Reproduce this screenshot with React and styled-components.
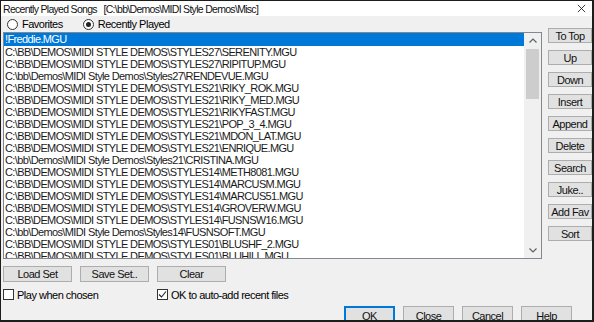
import React, { useState } from 'react';
import styled, { createGlobalStyle } from 'styled-components';

const GlobalStyle = createGlobalStyle`
  html, body {
    margin: 0;
    padding: 0;
    background: #f0f0f0;
  }
  * {
    box-sizing: border-box;
  }
`;

const songs = [
  '!Freddie.MGU',
  'C:\\BB\\DEMOS\\MIDI STYLE DEMOS\\STYLES27\\SERENITY.MGU',
  'C:\\BB\\DEMOS\\MIDI STYLE DEMOS\\STYLES27\\RIPITUP.MGU',
  'C:\\bb\\Demos\\MIDI Style Demos\\Styles27\\RENDEVUE.MGU',
  'C:\\BB\\DEMOS\\MIDI STYLE DEMOS\\STYLES21\\RIKY_ROK.MGU',
  'C:\\BB\\DEMOS\\MIDI STYLE DEMOS\\STYLES21\\RIKY_MED.MGU',
  'C:\\BB\\DEMOS\\MIDI STYLE DEMOS\\STYLES21\\RIKYFAST.MGU',
  'C:\\BB\\DEMOS\\MIDI STYLE DEMOS\\STYLES21\\POP_3_4.MGU',
  'C:\\BB\\DEMOS\\MIDI STYLE DEMOS\\STYLES21\\MDON_LAT.MGU',
  'C:\\BB\\DEMOS\\MIDI STYLE DEMOS\\STYLES21\\ENRIQUE.MGU',
  'C:\\bb\\Demos\\MIDI Style Demos\\Styles21\\CRISTINA.MGU',
  'C:\\BB\\DEMOS\\MIDI STYLE DEMOS\\STYLES14\\METH8081.MGU',
  'C:\\BB\\DEMOS\\MIDI STYLE DEMOS\\STYLES14\\MARCUSM.MGU',
  'C:\\BB\\DEMOS\\MIDI STYLE DEMOS\\STYLES14\\MARCUS51.MGU',
  'C:\\BB\\DEMOS\\MIDI STYLE DEMOS\\STYLES14\\GROVERW.MGU',
  'C:\\BB\\DEMOS\\MIDI STYLE DEMOS\\STYLES14\\FUSNSW16.MGU',
  'C:\\bb\\Demos\\MIDI Style Demos\\Styles14\\FUSNSOFT.MGU',
  'C:\\BB\\DEMOS\\MIDI STYLE DEMOS\\STYLES01\\BLUSHF_2.MGU',
  'C:\\BB\\DEMOS\\MIDI STYLE DEMOS\\STYLES01\\BLUHILL.MGU',
];

const sideButtons = ['To Top', 'Up', 'Down', 'Insert', 'Append', 'Delete', 'Search', 'Juke..', 'Add Fav', 'Sort'];

const App = () => {
  const [mode, setMode] = useState('recent');
  const [selected, setSelected] = useState(0);
  const [playWhenChosen, setPlayWhenChosen] = useState(false);
  const [autoAdd, setAutoAdd] = useState(true);

  return (
    <>
      <GlobalStyle />
      <Window>
        <TitleBar>
          <Title>Recently Played Songs&nbsp;&nbsp;&nbsp;[C:\bb\Demos\MIDI Style Demos\Misc]</Title>
          <CloseX viewBox="0 0 10 10">
            <path d="M1 1 L9 9 M9 1 L1 9" stroke="#222" strokeWidth="1" />
          </CloseX>
        </TitleBar>
        <Body>
          <Main>
            <LeftColumn>
              <RadioRow>
                <RadioLabel onClick={() => setMode('fav')}>
                  <RadioCircle checked={mode === 'fav'} />
                  Favorites
                </RadioLabel>
                <RadioLabel onClick={() => setMode('recent')}>
                  <RadioCircle checked={mode === 'recent'} />
                  Recently Played
                </RadioLabel>
              </RadioRow>
              <ListBox>
                <Rows>
                  {songs.map((song, index) => (
                    <Row key={index} selected={index === selected} onClick={() => setSelected(index)}>
                      {song}
                    </Row>
                  ))}
                </Rows>
                <ScrollBar>
                  <ScrollArrow viewBox="0 0 8 5">
                    <path d="M0.5 4.5 L4 1 L7.5 4.5" stroke="#606060" strokeWidth="1.2" fill="none" />
                  </ScrollArrow>
                  <Thumb />
                  <Track />
                  <ScrollArrow viewBox="0 0 8 5">
                    <path d="M0.5 0.5 L4 4 L7.5 0.5" stroke="#606060" strokeWidth="1.2" fill="none" />
                  </ScrollArrow>
                </ScrollBar>
              </ListBox>
            </LeftColumn>
            <SideButtons>
              {sideButtons.map((label) => (
                <SideButton key={label}>{label}</SideButton>
              ))}
            </SideButtons>
          </Main>
          <SetRow>
            <SetButton>Load Set</SetButton>
            <SetButton>Save Set..</SetButton>
            <SetButton>Clear</SetButton>
          </SetRow>
          <CheckRow>
            <CheckLabel onClick={() => setPlayWhenChosen(!playWhenChosen)}>
              <CheckBox>{playWhenChosen && <CheckMark />}</CheckBox>
              Play when chosen
            </CheckLabel>
            <CheckLabel onClick={() => setAutoAdd(!autoAdd)}>
              <CheckBox>{autoAdd && <CheckMark />}</CheckBox>
              OK to auto-add recent files
            </CheckLabel>
          </CheckRow>
          <DialogButtons>
            <DialogButton primary>OK</DialogButton>
            <DialogButton>Close</DialogButton>
            <DialogButton>Cancel</DialogButton>
            <DialogButton>Help</DialogButton>
          </DialogButtons>
        </Body>
      </Window>
    </>
  );
};

const CheckMark = () => (
  <svg width="9" height="9" viewBox="0 0 9 9">
    <path d="M1 4.5 L3.5 7 L8 1.5" stroke="#222" strokeWidth="1.1" fill="none" />
  </svg>
);

export default App;

const Window = styled.div`
  width: 594px;
  height: 322px;
  border: 1px solid #1c1c1c;
  border-right-width: 2px;
  border-bottom-width: 2px;
  background: #f0f0f0;
  display: flex;
  flex-direction: column;
  overflow: hidden;
  font-family: "Liberation Sans", Arial, sans-serif;
  font-size: 11px;
  color: #000;
`;

const TitleBar = styled.div`
  height: 15px;
  flex: none;
  background: #fff;
  display: flex;
  align-items: center;
  justify-content: space-between;
  padding: 0 6px 0 2px;
`;

const Title = styled.span`
  font-size: 10.5px;
  letter-spacing: -0.7px;
  color: #111;
  white-space: nowrap;
`;

const CloseX = styled.svg`
  width: 9px;
  height: 9px;
`;

const Body = styled.div`
  flex: 1;
  display: flex;
  flex-direction: column;
  padding-left: 2px;
`;

const Main = styled.div`
  display: flex;
  gap: 6px;
`;

const LeftColumn = styled.div`
  width: 542px;
  display: flex;
  flex-direction: column;
`;

const RadioRow = styled.div`
  height: 16px;
  display: flex;
  align-items: center;
  padding-left: 4px;
  gap: 20px;
`;

const RadioLabel = styled.label`
  display: flex;
  align-items: center;
  gap: 4px;
  letter-spacing: -0.5px;
  cursor: default;
`;

const RadioCircle = styled.span`
  width: 11px;
  height: 11px;
  border-radius: 50%;
  border: 1px solid #333;
  background: #fff;
  display: inline-flex;
  align-items: center;
  justify-content: center;
  &::after {
    content: '';
    width: 5px;
    height: 5px;
    border-radius: 50%;
    background: ${(p) => (p.checked ? '#222' : 'transparent')};
  }
`;

const ListBox = styled.div`
  height: 227px;
  border: 1px solid #828790;
  background: #fff;
  display: flex;
  overflow: hidden;
`;

const Rows = styled.div`
  flex: 1;
  overflow: hidden;
`;

const Row = styled.div`
  height: 12px;
  line-height: 12px;
  padding-left: 1px;
  white-space: nowrap;
  letter-spacing: -0.62px;
  font-size: 11px;
  color: ${(p) => (p.selected ? '#fff' : '#1a1a1a')};
  background: ${(p) => (p.selected ? '#0078d7' : 'transparent')};
  &:first-child {
    height: 13px;
    line-height: 13px;
  }
`;

const ScrollBar = styled.div`
  width: 17px;
  flex: none;
  background: #f0f0f0;
  display: flex;
  flex-direction: column;
  align-items: center;
`;

const ScrollArrow = styled.svg`
  width: 8px;
  height: 5px;
  margin: 5px 0;
  flex: none;
`;

const Thumb = styled.div`
  width: 13px;
  height: 50px;
  flex: none;
  background: #cdcdcd;
  margin-top: 1px;
`;

const Track = styled.div`
  flex: 1;
`;

const SideButtons = styled.div`
  display: flex;
  flex-direction: column;
  gap: 7px;
  padding-top: 12px;
`;

const Button = styled.button`
  font-family: "Liberation Sans", Arial, sans-serif;
  font-size: 11px;
  letter-spacing: -0.5px;
  color: #111;
  background: #e1e1e1;
  border: 1px solid #adadad;
  border-radius: 0;
  padding: 0;
  display: flex;
  align-items: center;
  justify-content: center;
`;

const SideButton = styled(Button)`
  width: 44px;
  height: 15px;
`;

const SetRow = styled.div`
  display: flex;
  gap: 8px;
  margin-top: 7px;
`;

const SetButton = styled(Button)`
  width: 69px;
  height: 16px;
`;

const CheckRow = styled.div`
  display: flex;
  align-items: center;
  height: 13px;
  margin-top: 6px;
`;

const CheckLabel = styled.label`
  display: flex;
  align-items: center;
  gap: 3px;
  width: 154px;
  letter-spacing: -0.5px;
  white-space: nowrap;
  &:last-child {
    width: auto;
  }
`;

const CheckBox = styled.span`
  width: 11px;
  height: 11px;
  border: 1px solid #333;
  background: #fff;
  display: inline-flex;
  align-items: center;
  justify-content: center;
`;

const DialogButtons = styled.div`
  display: flex;
  gap: 8px;
  margin-top: 5px;
  padding-left: 341px;
`;

const DialogButton = styled(Button)`
  width: 51px;
  height: 20px;
  border-color: ${(p) => (p.primary ? '#0078d7' : '#adadad')};
  box-shadow: ${(p) => (p.primary ? 'inset 0 0 0 1px #0078d7' : 'none')};
`;
